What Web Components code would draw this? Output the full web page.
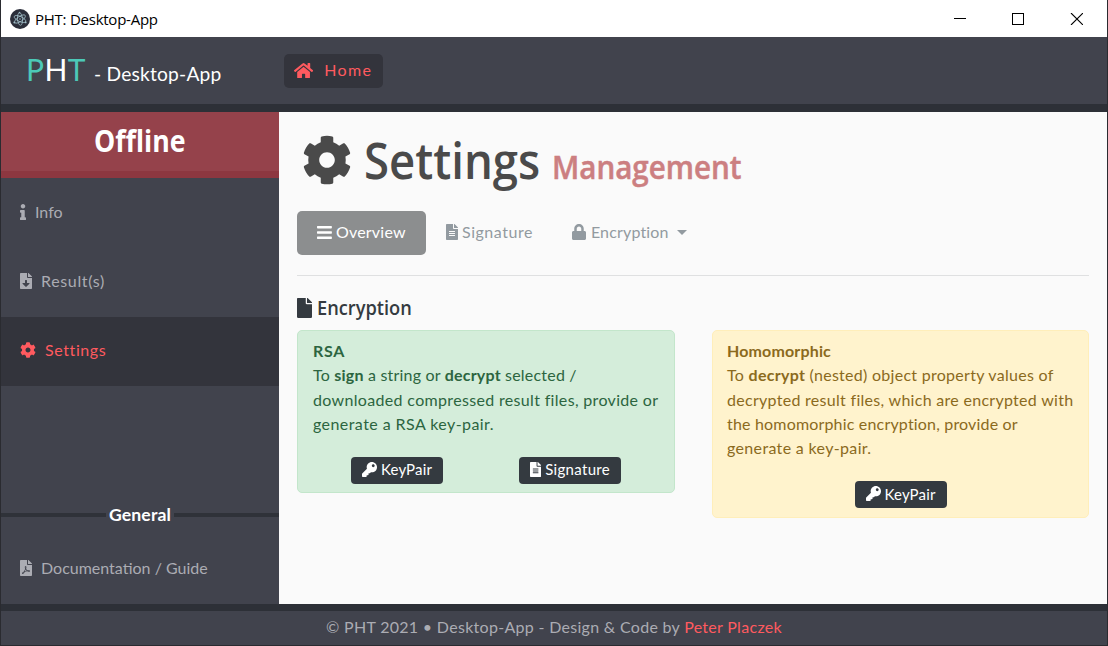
<!DOCTYPE html>
<html lang="en">
<head>
<meta charset="utf-8">
<title>PHT: Desktop-App</title>
<style>
html, body { margin: 0; height: 100%; overflow: hidden; background: #2a2b30; }
body { font: 400 16px/24px Lato, "Open Sans", sans-serif; }
</style>
</head>
<body>
<app-window></app-window>
<script>
const FILE_HEAD = 'M224 136V0H24C10.7 0 0 10.7 0 24v464c0 13.3 10.7 24 24 24h336c13.3 0 24-10.7 24-24V160H248c-13.2 0-24-10.8-24-24z';
const FILE_FOLD = 'M377 105L279.1 7c-4.5-4.5-10.6-7-17-7H256v128h128v-6.1c0-6.3-2.5-12.4-7-16.9z';
const ICONS = {
  home: [576, 'M280.37 148.26L96 300.11V464a16 16 0 0 0 16 16l112.06-.29a16 16 0 0 0 15.92-16V368a16 16 0 0 1 16-16h64a16 16 0 0 1 16 16v95.64a16 16 0 0 0 16 16.05L464 480a16 16 0 0 0 16-16V300L295.67 148.26a12.19 12.19 0 0 0-15.3 0zM571.6 251.47L488 182.56V44.05a12 12 0 0 0-12-12h-56a12 12 0 0 0-12 12v72.61L318.47 43a48 48 0 0 0-61 0L4.34 251.47a12 12 0 0 0-1.6 16.9l25.5 31A12 12 0 0 0 45.15 301l235.22-193.74a12.19 12.19 0 0 1 15.3 0L530.9 301a12 12 0 0 0 16.9-1.6l25.5-31a12 12 0 0 0-1.7-16.93z'],
  cog: [512, 'M487.4 315.7l-42.6-24.6c4.3-23.2 4.3-47 0-70.2l42.6-24.6c4.9-2.8 7.1-8.6 5.5-14-11.1-35.6-30-67.8-54.7-94.6-3.8-4.1-10-5.1-14.8-2.3L380.8 110c-17.9-15.4-38.5-27.3-60.8-35.1V25.8c0-5.6-3.9-10.5-9.4-11.7-36.7-8.2-74.3-7.8-109.2 0-5.5 1.2-9.4 6.1-9.4 11.7V75c-22.2 7.9-42.8 19.8-60.8 35.1L88.7 85.5c-4.9-2.8-11-1.9-14.8 2.3-24.7 26.7-43.6 58.9-54.7 94.6-1.7 5.4.6 11.2 5.5 14L67.3 221c-4.3 23.2-4.3 47 0 70.2l-42.6 24.6c-4.9 2.8-7.1 8.6-5.5 14 11.1 35.6 30 67.8 54.7 94.6 3.8 4.1 10 5.1 14.8 2.3l42.6-24.6c17.9 15.4 38.5 27.3 60.8 35.1v49.2c0 5.6 3.9 10.5 9.4 11.7 36.7 8.2 74.3 7.8 109.2 0 5.5-1.2 9.4-6.1 9.4-11.7v-49.2c22.2-7.9 42.8-19.8 60.8-35.1l42.6 24.6c4.9 2.8 11 1.9 14.8-2.3 24.7-26.7 43.6-58.9 54.7-94.6 1.5-5.5-.7-11.3-5.6-14.1zM256 336c-44.1 0-80-35.9-80-80s35.9-80 80-80 80 35.9 80 80-35.9 80-80 80z'],
  info: [192, 'M20 424.229h20V279.771H20c-11.046 0-20-8.954-20-20V212c0-11.046 8.954-20 20-20h112c11.046 0 20 8.954 20 20v212.229h20c11.046 0 20 8.954 20 20V492c0 11.046-8.954 20-20 20H20c-11.046 0-20-8.954-20-20v-47.771c0-11.046 8.954-20 20-20zM96 0C56.235 0 24 32.235 24 72s32.235 72 72 72 72-32.235 72-72S135.764 0 96 0z'],
  download: [384, FILE_HEAD + 'M300.45 347.36l-96.42 95.7c-6.65 6.61-17.39 6.61-24.04 0l-96.42-95.7C73.42 337.29 80.54 320 94.82 320H160v-80c0-8.84 7.16-16 16-16h32c8.84 0 16 7.16 16 16v80h65.18c14.28 0 21.4 17.29 11.27 27.36z' + FILE_FOLD],
  pdf: [384, 'M181.9 256.1c-5-16-4.9-46.9-2-46.9 8.4 0 7.6 36.9 2 46.9zm-1.7 47.2c-7.7 20.2-17.3 43.3-28.4 62.7 18.3-7 39-17.2 62.9-21.9-12.7-9.6-24.9-23.4-34.5-40.8zM86.1 428.1c0 .8 13.2-5.4 34.9-40.2-6.7 6.3-29.1 24.5-34.9 40.2zM248 160h136v328c0 13.3-10.7 24-24 24H24c-13.3 0-24-10.7-24-24V24C0 10.7 10.7 0 24 0h200v136c0 13.2 10.8 24 24 24zm-8 171.8c-20-12.2-33.3-29-42.7-53.8 4.5-18.5 11.6-46.6 6.2-64.2-4.7-29.4-42.4-26.5-47.8-6.8-5 18.3-.4 44.1 8.1 77-11.6 27.6-28.7 64.6-40.8 85.8-.1 0-.1.1-.2.1-27.1 13.9-73.6 44.5-54.5 68 5.6 6.9 16 10 21.5 10 17.9 0 35.7-18 61.1-61.8 25.8-8.5 54.1-19.1 79-23.2 21.7 11.8 47.1 19.5 64 19.5 29.2 0 31.2-32 19.7-43.4-13.9-13.6-54.3-9.7-73.6-7.2zM377 105L279 7c-4.5-4.5-10.6-7-17-7h-6v128h128v-6.1c0-6.3-2.5-12.4-7-16.9zm-74.1 255.3c4.1-2.7-2.5-11.9-42.8-9 37.1 15.8 42.8 9 42.8 9z'],
  file: [384, FILE_HEAD + FILE_FOLD],
  filetext: [384, FILE_HEAD + 'M288 372c0 6.6-5.4 12-12 12H108c-6.6 0-12-5.4-12-12v-8c0-6.6 5.4-12 12-12h168c6.6 0 12 5.4 12 12zM288 308c0 6.6-5.4 12-12 12H108c-6.6 0-12-5.4-12-12v-8c0-6.6 5.4-12 12-12h168c6.6 0 12 5.4 12 12zM288 244c0 6.6-5.4 12-12 12H108c-6.6 0-12-5.4-12-12v-8c0-6.6 5.4-12 12-12h168c6.6 0 12 5.4 12 12z' + FILE_FOLD],
  lock: [448, 'M400 224h-24v-72C376 68.2 307.8 0 224 0S72 68.2 72 152v72H48c-26.5 0-48 21.5-48 48v192c0 26.5 21.5 48 48 48h352c26.5 0 48-21.5 48-48V272c0-26.5-21.5-48-48-48zm-104 0H152v-72c0-39.7 32.3-72 72-72s72 32.3 72 72v72z'],
  key: [512, 'M512 176.001C512 273.203 433.202 352 336 352c-11.22 0-22.19-1.062-32.827-3.069l-24.012 27.014A23.999 23.999 0 0 1 261.223 384H224v40c0 13.255-10.745 24-24 24h-40v40c0 13.255-10.745 24-24 24H24c-13.255 0-24-10.745-24-24v-78.059c0-6.365 2.529-12.47 7.029-16.971l161.802-161.802C163.108 213.814 160 195.271 160 176 160 78.798 238.797.001 335.999 0 433.488-.001 512 78.511 512 176.001zM336 128c0 26.51 21.49 48 48 48s48-21.49 48-48-21.49-48-48-48-48 21.49-48 48z'],
  bars: [448, 'M16 132h416c8.8 0 16-7.2 16-16V76c0-8.8-7.2-16-16-16H16C7.2 60 0 67.2 0 76v40c0 8.8 7.2 16 16 16zm0 160h416c8.8 0 16-7.2 16-16v-40c0-8.8-7.2-16-16-16H16c-8.8 0-16 7.2-16 16v40c0 8.8 7.2 16 16 16zm0 160h416c8.8 0 16-7.2 16-16v-40c0-8.8-7.2-16-16-16H16c-8.8 0-16 7.2-16 16v40c0 8.8 7.2 16 16 16z']
};

const define = (name, html) => {
  const template = document.createElement('template');
  template.innerHTML = html;
  customElements.define(name, class extends HTMLElement {
    constructor() {
      super();
      this.attachShadow({ mode: 'open' }).append(template.content.cloneNode(true));
    }
  });
};

/* fa-icon: solid glyph; "size" is its height in pixels */
customElements.define('fa-icon', class extends HTMLElement {
  connectedCallback() {
    const [w, d] = ICONS[this.getAttribute('name')];
    const size = +(this.getAttribute('size') || 16);
    const root = this.shadowRoot || this.attachShadow({ mode: 'open' });
    root.innerHTML = `<style>:host{display:inline-block;flex:none;width:${w * size / 512}px;height:${size}px}svg{display:block}</style>
      <svg width="${w * size / 512}" height="${size}" viewBox="0 0 ${w} 512"><path fill="currentColor" fill-rule="evenodd" d="${d}"/></svg>`;
  }
});

/* display-text: condensed heading type; "ratio" squeezes the glyphs, "width" is the resulting box */
customElements.define('display-text', class extends HTMLElement {
  connectedCallback() {
    const root = this.shadowRoot || this.attachShadow({ mode: 'open' });
    root.innerHTML = `<style>:host{display:inline-block;flex:none;width:${this.getAttribute('width')}px;white-space:nowrap;font-family:"Open Sans",sans-serif;font-weight:600}
      span{display:inline-block;transform:scaleX(${this.getAttribute('ratio')});transform-origin:0 50%}</style><span><slot></slot></span>`;
  }
});

define('title-bar', `<style>
  :host { display:flex; align-items:center; height:37px; flex:none; background:#fff; color:#000; padding:0 24px 0 9px; box-sizing:border-box; font:400 15px/20px "Open Sans",sans-serif; letter-spacing:-.25px; }
  .logo { margin-right:5px; flex:none; }
  .name { flex:1; white-space:nowrap; }
  .controls { display:flex; gap:46px; }
  svg { display:block; }
</style>
<svg class="logo" width="20" height="20" viewBox="0 0 20 20"><circle cx="10" cy="10" r="10" fill="#2b2e3a"/>
<g fill="none" stroke="#9fbcc6" stroke-width=".8"><ellipse cx="10" cy="10" rx="6.3" ry="2.5" transform="rotate(25 10 10)"/><ellipse cx="10" cy="10" rx="6.3" ry="2.5" transform="rotate(85 10 10)"/><ellipse cx="10" cy="10" rx="6.3" ry="2.5" transform="rotate(145 10 10)"/></g>
<g fill="#9fbcc6"><circle cx="10" cy="10" r=".8"/><circle cx="4.3" cy="13.5" r=".9"/><circle cx="15.7" cy="13.4" r=".9"/><circle cx="9.5" cy="3.6" r=".8"/></g></svg>
<span class="name">PHT: Desktop-App</span>
<span class="controls">
<svg width="12" height="12" viewBox="0 0 12 12" shape-rendering="crispEdges"><path d="M0 5h12v1H0z"/></svg>
<svg width="12" height="12" viewBox="0 0 12 12" shape-rendering="crispEdges"><path d="M.5.5h11v11H.5z" fill="none" stroke="#000"/></svg>
<svg width="13" height="12" viewBox="0 0 13 12"><path d="M1 0L13 12M13 0L1 12" stroke="#000" stroke-width="1.1"/></svg>
</span>`);

define('app-header', `<style>
  :host { display:flex; align-items:center; height:75px; flex:none; box-sizing:border-box; border-bottom:8px solid #2d3037; background:#41434d; color:#fff; padding-left:25px; }
  .brand { width:258px; white-space:nowrap; font-size:19.2px; line-height:36px; letter-spacing:.2px; padding-top:1px; }
  .brand b { font:400 30px/36px Lato,sans-serif; letter-spacing:.45px; margin-right:3px; color:#4cc9b8; }
  .brand i { font-style:normal; color:#fff; }
  .home { display:flex; align-items:center; box-sizing:border-box; width:99px; height:34px; padding-left:10px; gap:11px; border-radius:5px; background:#33343c; color:#ff5a5f; letter-spacing:1.4px; }
  .home span { padding-bottom:2px; }
</style>
<span class="brand"><b>P<i>H</i>T</b> - Desktop-App</span>
<span class="home"><fa-icon name="home" size="17"></fa-icon><span>Home</span></span>`);

define('nav-item', `<style>
  :host { display:flex; align-items:center; height:69px; box-sizing:border-box; flex:none; padding:0 0 3px 19px; color:#abacb3; white-space:nowrap; }
  :host([active]) { background:#33343c; color:#ff5a5f; }
</style><slot></slot>`);

define('side-bar', `<style>
  :host { display:flex; flex-direction:column; width:278px; flex:none; background:#41434d; }
  .status { height:66px; flex:none; box-sizing:border-box; border-bottom:7px solid #8d3740; background:#95424b; color:#fff; text-align:center; font-size:31px; line-height:56px; padding-right:2px; }
  .status display-text { font-weight:700; text-align:left; }
  .gap { flex:1; }
  .divider { display:flex; align-items:center; height:24px; margin-bottom:8px; color:#fff; font-weight:700; font-size:17.6px; letter-spacing:.12px; gap:3px; }
  .divider::before, .divider::after { content:""; flex:1; height:4px; background:#2f3239; }
  nav-item span { margin-left:9px; }
</style>
<div class="status"><display-text width="91" ratio=".862">Offline</display-text></div>
<nav-item style="padding-bottom:1px"><fa-icon name="info"></fa-icon><span>Info</span></nav-item>
<nav-item style="height:70px;letter-spacing:.65px"><fa-icon name="download"></fa-icon><span>Result(s)</span></nav-item>
<nav-item active style="letter-spacing:.6px"><fa-icon name="cog"></fa-icon><span>Settings</span></nav-item>
<div class="gap"></div>
<div class="divider">General</div>
<nav-item><fa-icon name="pdf"></fa-icon><span>Documentation / Guide</span></nav-item>`);

define('tab-item', `<style>
  :host { display:flex; align-items:center; height:44px; box-sizing:border-box; color:#929aa0; white-space:nowrap; gap:4px; padding-bottom:2px; }
  :host([active]) { width:129px; padding-left:20px; border-radius:5px; background:#8c8e8f; color:#fff; }
</style><slot></slot>`);

define('dark-button', `<style>
  :host { display:inline-flex; align-items:center; justify-content:center; height:27px; box-sizing:border-box; padding-bottom:2px; border-radius:4px; background:#343a40; color:#fff; font-size:15px; line-height:24px; gap:4px; white-space:nowrap; }
</style><slot></slot>`);

define('alert-card', `<style>
  :host { display:block; box-sizing:border-box; border:1px solid; border-radius:5px; padding:8px 15px 8px; line-height:24.3px; white-space:nowrap; }
  :host([kind=success]) { background:#d4edda; border-color:#c3e6cb; color:#2c6540; height:163px; }
  :host([kind=warning]) { background:#fff3cd; border-color:#ffeeba; color:#8b6a1d; height:188px; padding:8px 14px; }
  .actions { display:flex; justify-content:space-around; margin-top:20.8px; }
</style><slot></slot><div class="actions"><slot name="action"></slot></div>`);

define('settings-page', `<style>
  :host { display:block; flex:1; background:#fafafa; padding:17px 18px 0; box-sizing:border-box; color:#343a40; }
  h1 { display:flex; align-items:baseline; margin:0; height:82px; color:#4a4a4a; font-size:50px; line-height:62px; font-weight:600; }
  h1 fa-icon { align-self:flex-start; margin:6px 12px 0 5px; }
  h1 .sub { color:#cc7f81; font-size:33px; margin-left:13px; -webkit-text-stroke:.5px #cc7f81; }
  .tabs { display:flex; border-bottom:1px solid #dfe0e1; padding-bottom:20px; }
  .caret { width:0; border:5px solid transparent; border-top-color:currentColor; border-bottom:0; margin-left:4px; }
  h2 { display:flex; align-items:center; gap:5px; margin:18px 0 9px; height:27px; font-size:20px; line-height:27px; font-weight:600; }
  .cards { display:grid; grid-template-columns:378px 377px; gap:37px; align-items:start; }
  b { font-weight:700; }
  .cards span { display:block; }
</style>
<h1><fa-icon name="cog" size="50"></fa-icon><display-text width="175" ratio=".91">Settings</display-text><display-text class="sub" width="189" ratio=".896">Management</display-text></h1>
<div class="tabs">
<tab-item active style="letter-spacing:.23px"><fa-icon name="bars" size="17"></fa-icon><span>Overview</span></tab-item>
<tab-item style="margin-left:20px;letter-spacing:.53px"><fa-icon name="filetext"></fa-icon><span>Signature</span></tab-item>
<tab-item style="margin-left:39px;letter-spacing:.16px"><fa-icon name="lock"></fa-icon><span style="margin-left:1px">Encryption</span><span class="caret"></span></tab-item>
</div>
<h2><fa-icon name="file" size="20"></fa-icon><display-text width="95" ratio=".912">Encryption</display-text></h2>
<div class="cards">
<alert-card kind="success">
<span style="letter-spacing:.7px"><b>RSA</b></span>
<span style="letter-spacing:.2px">To <b>sign</b> a string or <b>decrypt</b> selected /</span>
<span style="letter-spacing:.33px">downloaded compressed result files, provide or</span>
<span style="letter-spacing:.43px">generate a RSA key-pair.</span>
<dark-button slot="action" style="width:92px;letter-spacing:.15px"><fa-icon name="key" size="15"></fa-icon><span>KeyPair</span></dark-button>
<dark-button slot="action" style="width:102px;letter-spacing:.33px"><fa-icon name="filetext" size="15"></fa-icon><span>Signature</span></dark-button>
</alert-card>
<alert-card kind="warning">
<span style="letter-spacing:.15px"><b>Homomorphic</b></span>
<span style="letter-spacing:.28px">To <b>decrypt</b> (nested) object property values of</span>
<span style="letter-spacing:.29px">decrypted result files, which are encrypted with</span>
<span style="letter-spacing:.18px">the homomorphic encryption, provide or</span>
<span style="letter-spacing:.34px">generate a key-pair.</span>
<dark-button slot="action" style="width:92px;letter-spacing:.15px"><fa-icon name="key" size="15"></fa-icon><span>KeyPair</span></dark-button>
</alert-card>
</div>`);

define('app-footer', `<style>
  :host { display:flex; justify-content:center; height:41px; flex:none; box-sizing:border-box; border-top:7px solid #2d3037; background:#41434d; color:#abacb3; line-height:32px; letter-spacing:.3px; white-space:pre; }
  a { color:#ff5a5f; }
</style><span>© PHT 2021 • Desktop-App - Design &amp; Code by <a>Peter Placzek</a></span>`);

define('app-window', `<style>
  :host { display:flex; flex-direction:column; height:646px; box-sizing:border-box; border:1px solid #2a2b30; border-top:0; }
  main { display:flex; height:492px; flex:none; }
</style>
<title-bar></title-bar><app-header></app-header>
<main><side-bar></side-bar><settings-page></settings-page></main>
<app-footer></app-footer>`);
</script>
</body>
</html>
